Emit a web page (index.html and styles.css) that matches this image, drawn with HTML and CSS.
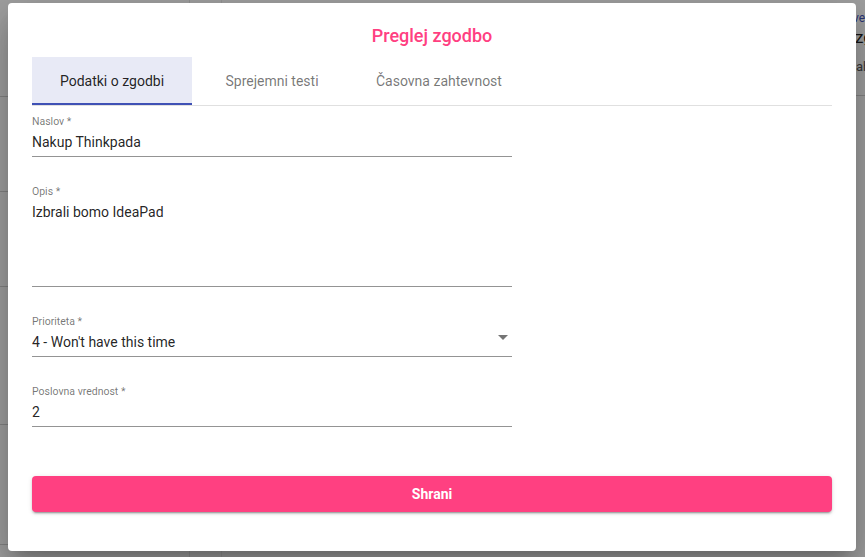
FILE: index.html
```html
<!DOCTYPE html>
<html lang="sl">
<head>
<meta charset="utf-8">
<title>Preglej zgodbo</title>
<link rel="stylesheet" href="styles.css">
</head>
<body>
<div class="page">
  <div class="bg-cols">
    <div class="bg-col bg-col-a">
      <div class="bg-row r1"></div>
      <div class="bg-row r2"></div>
      <div class="bg-row r3"></div>
      <div class="bg-row r4"></div>
      <div class="bg-row r5"></div>
    </div>
    <div class="bg-col bg-col-b"></div>
    <div class="bg-col bg-col-c">
      <div class="bg-right">
        <span class="bg-link">ve</span>
        <span class="bg-title">zg</span>
        <span class="bg-sub">ah</span>
      </div>
    </div>
  </div>
</div>
<div class="backdrop"></div>
<div class="dialog">
  <h2 class="dialog-title">Preglej zgodbo</h2>
  <div class="tabs">
    <div class="tab active">Podatki o zgodbi</div>
    <div class="tab">Sprejemni testi</div>
    <div class="tab">Časovna zahtevnost</div>
  </div>
  <form class="form">
    <div class="field">
      <div class="label">Naslov *</div>
      <div class="value">Nakup Thinkpada</div>
    </div>
    <div class="field">
      <div class="label">Opis *</div>
      <div class="value textarea">Izbrali bomo IdeaPad</div>
    </div>
    <div class="field">
      <div class="label">Prioriteta *</div>
      <div class="value select">
        <span>4 - Won't have this time</span>
        <span class="arrow"></span>
      </div>
    </div>
    <div class="field">
      <div class="label">Poslovna vrednost *</div>
      <div class="value">2</div>
    </div>
    <button type="button" class="save">Shrani</button>
  </form>
</div>
</body>
</html>
```
FILE: styles.css
```css
* { box-sizing: border-box; }
html, body { margin: 0; padding: 0; }
body {
  width: 865px;
  height: 557px;
  overflow: hidden;
  font-family: Roboto, "Liberation Sans", Arial, sans-serif;
  background: #f3f3f3;
  position: relative;
}
.page { height: 557px; }
.bg-cols { display: flex; height: 100%; }
.bg-col-a { width: 190px; border-right: 1px solid #dcdcdc; display: flex; flex-direction: column; }
.bg-col-b { width: 32px; border-right: 1px solid #e3e3e3; }
.bg-col-c { flex: 1; display: flex; justify-content: flex-end; }
.bg-row { border-bottom: 1px solid #c8c8c8; }
.r1 { height: 97px; }
.r2 { height: 95px; }
.r3 { height: 95px; }
.r4 { height: 138px; }
.r5 { height: 120px; }
.bg-right {
  width: 200px;
  height: 96px;
  border-bottom: 1px solid #c8c8c8;
  display: flex;
  flex-direction: column;
  align-items: flex-start;
  padding-top: 11px;
  padding-left: 188px;
  font-size: 14px;
  overflow: hidden;
}
.bg-link { color: #3f51b5; font-size: 12px; margin-left: 0; }
.bg-title { color: #222; font-size: 17px; margin-top: 2px; margin-left: 2px; }
.bg-sub { color: #555; font-size: 13px; margin-top: 12px; margin-left: 3px; }

.backdrop {
  position: absolute;
  inset: 0;
  background: rgba(0, 0, 0, 0.34);
}
.dialog {
  position: absolute;
  left: 8px;
  top: 3px;
  width: 848px;
  height: 548px;
  background: #fff;
  border-radius: 4px;
  padding: 24px;
  box-shadow: 0 11px 15px -7px rgba(0,0,0,.2), 0 24px 38px 3px rgba(0,0,0,.14), 0 9px 46px 8px rgba(0,0,0,.12);
}
.dialog-title {
  margin: 0 0 12px;
  height: 18px;
  line-height: 18px;
  font-size: 18px;
  font-weight: 500;
  text-align: center;
  color: #ff4081;
}
.tabs {
  display: flex;
  height: 49px;
  border-bottom: 1px solid rgba(0,0,0,.12);
}
.tab {
  min-width: 160px;
  padding: 0 24px;
  height: 48px;
  display: flex;
  align-items: center;
  justify-content: center;
  font-size: 14px;
  font-weight: 400;
  color: rgba(0,0,0,.55);
}
.tab.active {
  background: #e8eaf6;
  color: rgba(0,0,0,.87);
  border-bottom: 2px solid #3f51b5;
  height: 48px;
  padding-top: 2px;
}
.form { display: flex; flex-direction: column; }
.field {
  width: 480px;
  padding-top: 10px;
  margin-bottom: 19px;
}
.label {
  font-size: 10.5px;
  line-height: 12px;
  color: rgba(0,0,0,.54);
}
.value {
  margin-top: 4px;
  font-size: 14px;
  line-height: 20px;
  padding-bottom: 4px;
  color: rgba(0,0,0,.87);
  border-bottom: 1px solid rgba(0,0,0,.42);
}
.textarea { height: 85px; }
.select { display: flex; justify-content: space-between; align-items: center; }
.arrow {
  width: 0; height: 0;
  border-left: 5px solid transparent;
  border-right: 5px solid transparent;
  border-top: 5px solid rgba(0,0,0,.54);
  margin-right: 4px;
  margin-top: -9px;
}
.save {
  margin-top: 30px;
  height: 36px;
  width: 800px;
  border: 0;
  border-radius: 4px;
  background: #ff4081;
  color: #fff;
  font-family: inherit;
  font-size: 14px;
  font-weight: 700;
  box-shadow: 0 3px 1px -2px rgba(0,0,0,.2), 0 2px 2px 0 rgba(0,0,0,.14), 0 1px 5px 0 rgba(0,0,0,.12);
}
```
